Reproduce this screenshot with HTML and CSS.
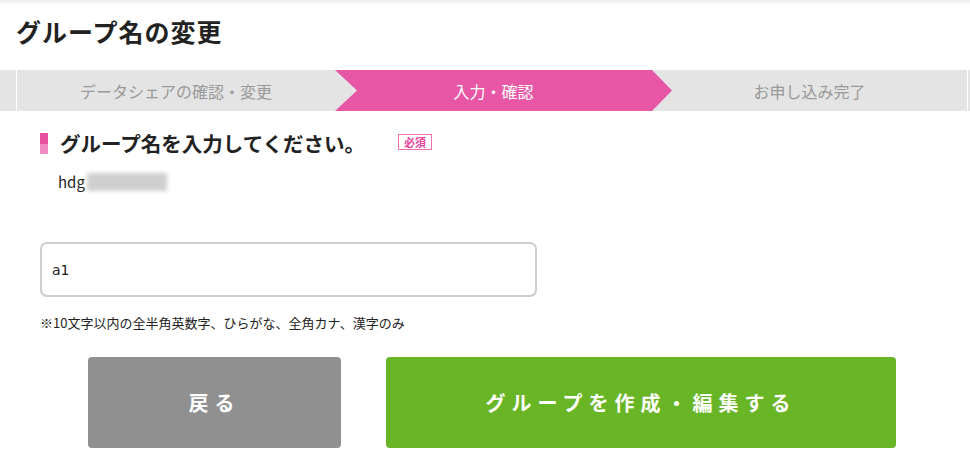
FILE: index.html
```html
<!DOCTYPE html>
<html lang="ja">
<head>
  <meta charset="UTF-8">
  <meta name="viewport" content="width=device-width, initial-scale=1.0">
  <title>グループ名の変更</title>
  <link rel="stylesheet" href="styles.css">
</head>
<body>
  <header class="page-head">
    <h1 class="page-title">グループ名の変更</h1>
  </header>
  <nav class="steps">
    <div class="step-edge"></div>
    <div class="step step-done">データシェアの確認・変更</div>
    <div class="step step-active">入力・確認</div>
    <div class="step step-next">お申し込み完了</div>
    <div class="step-edge step-edge-right"></div>
  </nav>
  <main class="content">
    <div class="field-head">
      <span class="field-mark"></span>
      <h2 class="field-title">グループ名を入力してください。</h2>
      <span class="badge">必須</span>
    </div>
    <p class="current">hdg<span class="masked"></span></p>
    <input class="name-input" type="text" value="a1">
    <p class="note">※10文字以内の全半角英数字、ひらがな、全角カナ、漢字のみ</p>
    <div class="buttons">
      <button class="btn btn-back">戻る</button>
      <button class="btn btn-submit">グループを作成・編集する</button>
    </div>
  </main>
</body>
</html>
```

FILE: styles.css
```css
body {
  margin: 0;
  font-family: "Noto Sans CJK JP", "Noto Sans", sans-serif;
  color: #333;
  background: #fff;
}
.page-head {
  height: 70px;
  background: linear-gradient(#ececec 0, #fff 5px);
  box-sizing: border-box;
  padding: 13px 16px 0;
}
.page-title {
  margin: 0;
  font-size: 25px;
  line-height: 36px;
  font-weight: bold;
  color: #222;
  letter-spacing: 1px;
}
.steps {
  display: flex;
  height: 41px;
  background: #e4e4e4;
}
.steps > div {
  flex-shrink: 0;
}
.step-edge {
  width: 16px;
  border-right: 1px solid #fff;
}
.step-edge-right {
  width: 2px;
  border-right: none;
  border-left: 1px solid #fff;
}
.step {
  display: flex;
  align-items: center;
  justify-content: center;
  font-size: 16px;
  color: #999;
}
.step-done {
  width: 318px;
}
.step-active {
  width: 337px;
  box-sizing: border-box;
  padding-right: 20px;
  background: #e857a6;
  color: #fff;
  position: relative;
  z-index: 1;
  clip-path: polygon(0 0, calc(100% - 20px) 0, 100% 50%, calc(100% - 20px) 100%, 0 100%, 22px 50%);
}
.step-next {
  width: 315px;
  margin-left: -20px;
}
.content {
  padding: 0 40px;
}
.field-head {
  display: flex;
  align-items: center;
  margin-top: 21px;
  height: 22px;
}
.field-mark {
  width: 8px;
  height: 21px;
  background: linear-gradient(#e8519d 50%, #f18bc3 50%);
  margin-right: 12px;
}
.field-title {
  margin: 0;
  font-size: 20.5px;
  font-weight: bold;
  color: #222;
}
.badge {
  margin-left: 33px;
  margin-bottom: 3px;
  border: 1px solid #ee6fb2;
  color: #e8459c;
  font-size: 11px;
  font-weight: bold;
  line-height: 14px;
  padding: 0 5px;
}
.current {
  margin: 18px 0 0 18px;
  font-size: 15px;
  line-height: 20px;
  color: #222;
  display: flex;
  align-items: center;
}
.masked {
  display: inline-block;
  width: 80px;
  height: 18px;
  margin-left: 2px;
  background: #cfcfcf;
  filter: blur(2px);
}
.name-input {
  display: block;
  margin-top: 50px;
  width: 497px;
  height: 55px;
  box-sizing: border-box;
  border: 2px solid #cdcdcd;
  border-radius: 7px;
  padding: 0 10px;
  font-family: "DejaVu Sans", sans-serif;
  font-size: 14px;
  color: #222;
}
.note {
  margin: 17px 0 0;
  font-size: 13px;
  line-height: 18px;
  color: #222;
}
.buttons {
  display: flex;
  gap: 45px;
  margin: 25px 0 0 48px;
}
.btn {
  height: 91px;
  border: none;
  border-radius: 4px;
  color: #fff;
  font-family: "Noto Sans CJK JP", sans-serif;
  font-size: 20px;
  font-weight: bold;
  letter-spacing: 6px;
  cursor: pointer;
}
.btn-back {
  width: 253px;
  background: #909090;
}
.btn-submit {
  width: 510px;
  background: #68b526;
}
```
